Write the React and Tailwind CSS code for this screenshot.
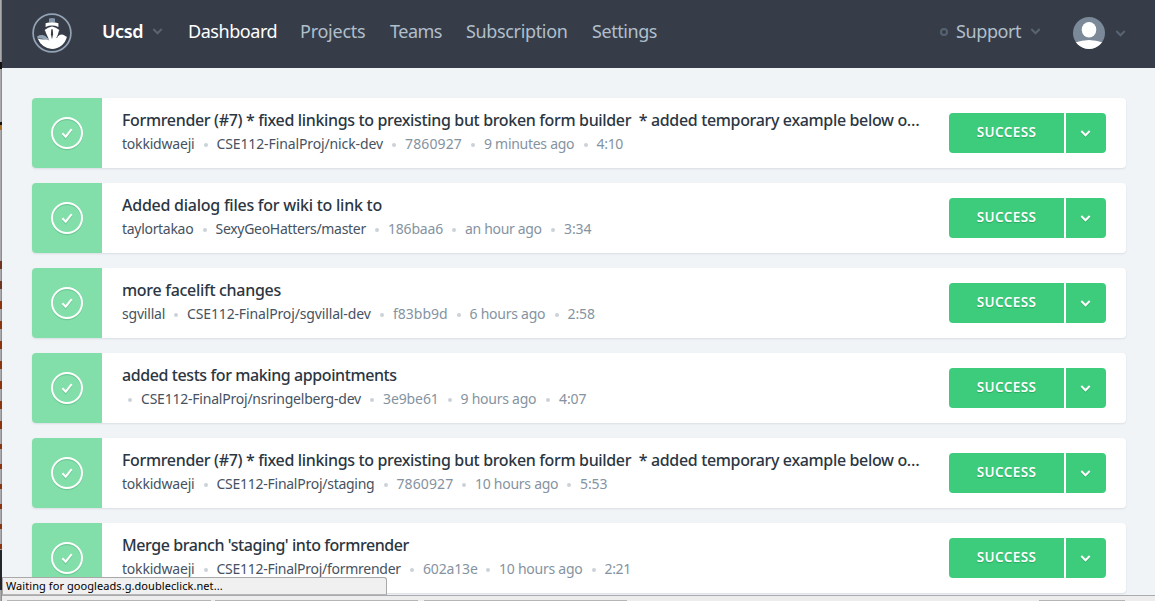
const NAV = [
  { label: 'Dashboard', style: 'w-[88px] tracking-[-0.45px] text-white' },
  { label: 'Projects', style: 'w-[66px] tracking-[-0.25px] text-[#b1bfcb]' },
  { label: 'Teams', style: 'w-[52px] tracking-[-0.5px] text-[#b1bfcb]' },
  { label: 'Subscription', style: 'w-[102px] tracking-[-0.35px] text-[#b1bfcb]' },
  { label: 'Settings', style: 'w-[66px] tracking-[-0.43px] text-[#b1bfcb]' },
];

const BUILDS = [
  {
    title: 'Formrender (#7) * fixed linkings to prexisting but broken form builder  * added temporary example below o…',
    titleStyle: 'tracking-[-0.345px]',
    author: ['tokkidwaeji', 'w-[72.5px] tracking-[-0.2px]'],
    branch: ['CSE112-FinalProj/nick-dev', 'w-[166.5px] tracking-[-0.12px]'],
    commit: ['7860927', 'w-[57px] tracking-[0.13px]'],
    when: ['9 minutes ago', 'w-[90.5px] tracking-[-0.28px]'],
    time: ['4:10', 'tracking-[-0.3px]'],
  },
  {
    title: 'Added dialog files for wiki to link to',
    titleStyle: 'tracking-[-0.25px]',
    author: ['taylortakao', 'w-[71.5px] tracking-[-0.3px]'],
    branch: ['SexyGeoHatters/master', 'w-[150.5px] tracking-[-0.3px]'],
    commit: ['186baa6', 'w-[55px] tracking-[-0.2px]'],
    when: ['an hour ago', 'w-[77px] tracking-[-0.32px]'],
    time: ['3:34', 'tracking-[-0.1px]'],
  },
  {
    title: 'more facelift changes',
    titleStyle: 'tracking-[-0.3px]',
    author: ['sgvillal', 'w-[43px] tracking-[-0.2px]'],
    branch: ['CSE112-FinalProj/sgvillal-dev', 'w-[184px] tracking-[-0.14px]'],
    commit: ['f83bb9d', 'w-[54.5px] tracking-[0px]'],
    when: ['6 hours ago', 'w-[76px] tracking-[-0.25px]'],
    time: ['2:58', 'tracking-[-0.1px]'],
  },
  {
    title: 'added tests for making appointments',
    titleStyle: 'tracking-[-0.41px]',
    author: null,
    branch: ['CSE112-FinalProj/nsringelberg-dev', 'w-[220px] tracking-[-0.22px]'],
    commit: ['3e9be61', 'w-[55.5px] tracking-[-0.1px]'],
    when: ['9 hours ago', 'w-[76.5px] tracking-[-0.25px]'],
    time: ['4:07', 'tracking-[-0.1px]'],
  },
  {
    title: 'Formrender (#7) * fixed linkings to prexisting but broken form builder  * added temporary example below o…',
    titleStyle: 'tracking-[-0.345px]',
    author: ['tokkidwaeji', 'w-[72.5px] tracking-[-0.2px]'],
    branch: ['CSE112-FinalProj/staging', 'w-[158px] tracking-[-0.26px]'],
    commit: ['7860927', 'w-[56.5px] tracking-[0.1px]'],
    when: ['10 hours ago', 'w-[83px] tracking-[-0.27px]'],
    time: ['5:53', 'tracking-[-0.1px]'],
  },
  {
    title: "Merge branch 'staging' into formrender",
    titleStyle: 'tracking-[-0.43px]',
    author: ['tokkidwaeji', 'w-[72.5px] tracking-[-0.2px]'],
    branch: ['CSE112-FinalProj/formrender', 'w-[184.5px] tracking-[-0.27px]'],
    commit: ['602a13e', 'w-[54px] tracking-[-0.16px]'],
    when: ['10 hours ago', 'w-[83.5px] tracking-[-0.25px]'],
    time: ['2:21', 'tracking-[-0.35px]'],
  },
];

// Marks of the window behind, seen along the left edge: [height, style]
const EDGE = [
  [62, ''], [7, 'bg-[#16130f]'], [53, ''], [3, 'bg-[#16130f]'], [5, 'bg-[#a8712c]'],
  [131, ''], [8, 'bg-[#6f3520]'], [12, ''], [8, 'bg-[#6f3520]'], [12, ''], [8, 'bg-[#8a3410]'],
  [12, ''], [8, 'bg-[#8a3410]'], [12, ''], [8, 'bg-[#8a3410]'], [12, ''], [8, 'bg-[#8a3410]'],
  [12, ''], [8, 'bg-[#8a3410]'], [12, ''], [8, 'bg-[#8a3410]'], [12, ''], [8, 'bg-[#8a3410]'],
  [15, ''], [5, 'bg-[#8a3410]'], [15, ''], [5, 'bg-[#8a3410]'], [15, ''], [5, 'bg-[#8a3410]'],
  [15, ''], [5, 'bg-[#8a3410]'], [15, ''], [5, 'bg-[#8a3410]'], [15, ''], [5, 'bg-[#8a3410]'],
  [1, ''], [40, 'bg-[#25262b]'],
];

function Chevron({ className }) {
  return (
    <svg viewBox="0 0 12 8" className={className} fill="none" stroke="currentColor" strokeWidth="2.3">
      <path d="M1.200 1.200 6 6l4.800-4.800" />
    </svg>
  );
}

function Logo() {
  return (
    <svg viewBox="0 0 40 40" className="size-10 shrink-0">
      <circle cx="20" cy="20" r="18.900" fill="none" stroke="#93a3b4" strokeWidth="1.700" />
      <path d="M17 5.600q3-1 6 0V9.200h-6z" fill="#8496aa" />
      <path d="M13.600 10.300q6.400-2.100 12.800 0v3.600Q20 11 13.600 13.900z" fill="#fff" />
      <path d="M5.300 23.200c3-1.900 6.300-1.600 8.700.2 2.200 1.600 3.600 3.600 6 5l-3 1.600c-3-3.500-7-5-11.500-4.300z" fill="#93a3b4" />
      <path d="M5.800 25.800c4.200 1 8 .2 11.600 1.700L12.600 17q3.400-2.600 7.400-3.400 4 .8 7.400 3.400l-2.400 7.600c1.700-2.600 4.700-4 7.200-2.300 1 .7 1.700 1.300 2.700 1.500A15.600 15.600 0 0 1 20 36 15.800 15.800 0 0 1 5.800 25.800z" fill="#fff" />
      <path d="M12.700 17.500c.1 3.400 1.100 5.800 3.100 7.500M27.300 17.500c-.2 3-1.300 5.300-2.800 7.500" fill="none" stroke="#363d49" strokeWidth=".7" />
      <path d="M19.300 16.300h1.400l.4 5-1.100 5-1.100-5z" fill="#363d49" />
    </svg>
  );
}

function Avatar() {
  return (
    <svg viewBox="0 0 32 32" className="size-8 shrink-0">
      <defs>
        <clipPath id="avatar-disc"><circle cx="16" cy="16" r="16" /></clipPath>
      </defs>
      <g clipPath="url(#avatar-disc)">
        <rect width="32" height="32" fill="#7b8999" />
        <ellipse cx="16" cy="12.700" rx="7.300" ry="7.700" fill="#fff" />
        <path d="M2 25.500q14-5 28 0v8H2z" fill="#fff" />
      </g>
    </svg>
  );
}

function Header() {
  return (
    <header className="flex h-[68px] shrink-0 items-center bg-[#363d49] pl-[30px] pr-[29px] pb-[6px] text-[18px]">
      <div className="mr-[30px] flex pt-[4px]"><Logo /></div>
      <span className="w-[42px] whitespace-nowrap font-semibold tracking-[-0.4px] text-white">Ucsd</span>
      <Chevron className="ml-[8px] mt-px h-[7px] w-[11px] text-[#5a6472]" />
      <nav className="ml-[25px] flex gap-6">
        {NAV.map((item) => (
          <a key={item.label} className={`whitespace-nowrap ${item.style}`}>{item.label}</a>
        ))}
      </nav>
      <div className="ml-auto flex items-center">
        <span className="mt-[2px] size-2 rounded-full border-2 border-[#566271]" />
        <span className="ml-2 w-[66px] whitespace-nowrap tracking-[-0.4px] text-[#b1bfcb]">Support</span>
        <Chevron className="ml-[8px] mt-px h-[7px] w-[11px] text-[#5a6472]" />
        <div className="ml-[32px] flex pt-[4px]"><Avatar /></div>
        <Chevron className="ml-[10px] mt-[4px] h-[7px] w-[11px] text-[#5a6472]" />
      </div>
    </header>
  );
}

function Dot() {
  return <span className="ml-[9px] mr-[9px] mt-[2px] size-1 shrink-0 rounded-full bg-[#cbd2d8]" />;
}

function Item({ value, className }) {
  return <span className={`shrink-0 ${className} ${value[1]}`}>{value[0]}</span>;
}

function BuildRow({ build }) {
  return (
    <li className="flex h-[70px] shrink-0 overflow-hidden rounded-[4px] bg-white shadow-[0_1px_2px_rgba(60,80,100,0.13)]">
      <div className="flex w-[70px] shrink-0 items-center justify-center bg-[#82dfa9]">
        <svg viewBox="0 0 34 36" className="h-9 w-[34px]" fill="none" strokeWidth="2">
          <g stroke="#5fb886" opacity=".55" transform="translate(0 1.200)">
            <circle cx="17" cy="18" r="15" />
            <path d="m12.600 18.500 3 3.500 6-7.500" />
          </g>
          <g stroke="#fff">
            <circle cx="17" cy="18" r="15" />
            <path d="m12.400 18.300 3.300 3.400 6-7.500" />
          </g>
        </svg>
      </div>
      <div className="flex min-w-0 flex-1 flex-col pl-5 pt-[10px]">
        <h2 className={`h-6 whitespace-pre text-[16px] font-medium leading-6 text-[#2b3642] ${build.titleStyle}`}>{build.title}</h2>
        <div className="flex h-6 items-center whitespace-nowrap text-[14px] leading-6 text-[#8593a1]">
          {build.author ? <Item value={build.author} className="text-[#465261]" /> : <span className="-ml-[3px]" />}
          <Dot />
          <Item value={build.branch} className="text-[#465261]" />
          <Dot />
          <Item value={build.commit} className="" />
          <Dot />
          <Item value={build.when} className="" />
          <Dot />
          <Item value={build.time} className="" />
        </div>
      </div>
      <div className="mr-5 flex shrink-0 items-center gap-[2px] text-white">
        <button className="flex h-10 w-[115px] items-center justify-center rounded-l-[4px] bg-[#3ccc7c] pb-px text-[13.5px] font-semibold tracking-[0.4px] [text-shadow:0_1px_1px_rgba(0,90,40,0.3)]">SUCCESS</button>
        <button className="flex h-10 w-10 items-center justify-center rounded-r-[4px] bg-[#3ccc7c] pr-px">
          <Chevron className="h-[7px] w-[11px] drop-shadow-[0_1px_0_rgba(0,90,40,0.25)]" />
        </button>
      </div>
    </li>
  );
}

export default function App() {
  return (
    <div className="relative flex h-[601px] w-[1155px] overflow-hidden bg-[#f0f4f7] font-['Noto_Sans',sans-serif]">
      <div className="flex w-[2px] shrink-0 flex-col border-r border-[#8d8d8f] bg-[#aaaaac]">
        {EDGE.map(([height, style], i) => (
          <span key={i} className={`-mr-px shrink-0 ${style}`} style={{ height }} />
        ))}
      </div>
      <div className="flex min-w-0 flex-1 flex-col">
        <Header />
        <ul className="flex h-[527px] shrink-0 flex-col gap-[15px] overflow-hidden pl-[30px] pr-[29px] pt-[30px]">
          {BUILDS.map((build, i) => <BuildRow key={i} build={build} />)}
        </ul>
        <footer className="flex h-[6px] shrink-0 items-end border-t border-[#a9abae] bg-[#ededed]">
          <span className="ml-[5px] h-[1px] w-[204px] bg-[#b5b5b5]" />
          <span className="ml-[4px] h-[1px] w-[203px] bg-[#b5b5b5]" />
          <span className="ml-[6px] h-[1px] w-[203px] bg-[#b5b5b5]" />
          <span className="ml-auto mr-[30px] h-[1px] w-[86px] bg-[#b5b5b5]" />
        </footer>
      </div>
      <div className="absolute left-[2px] top-[577px] flex h-[18px] w-[385px] items-center rounded-tr-[3px] border border-[#a9a9a9] border-b-[#b5b5b5] bg-[#f0f0f0] pl-[3px] text-[11px] leading-4 tracking-[0.07px] text-black">
        Waiting for googleads.g.doubleclick.net...
      </div>
    </div>
  );
}
